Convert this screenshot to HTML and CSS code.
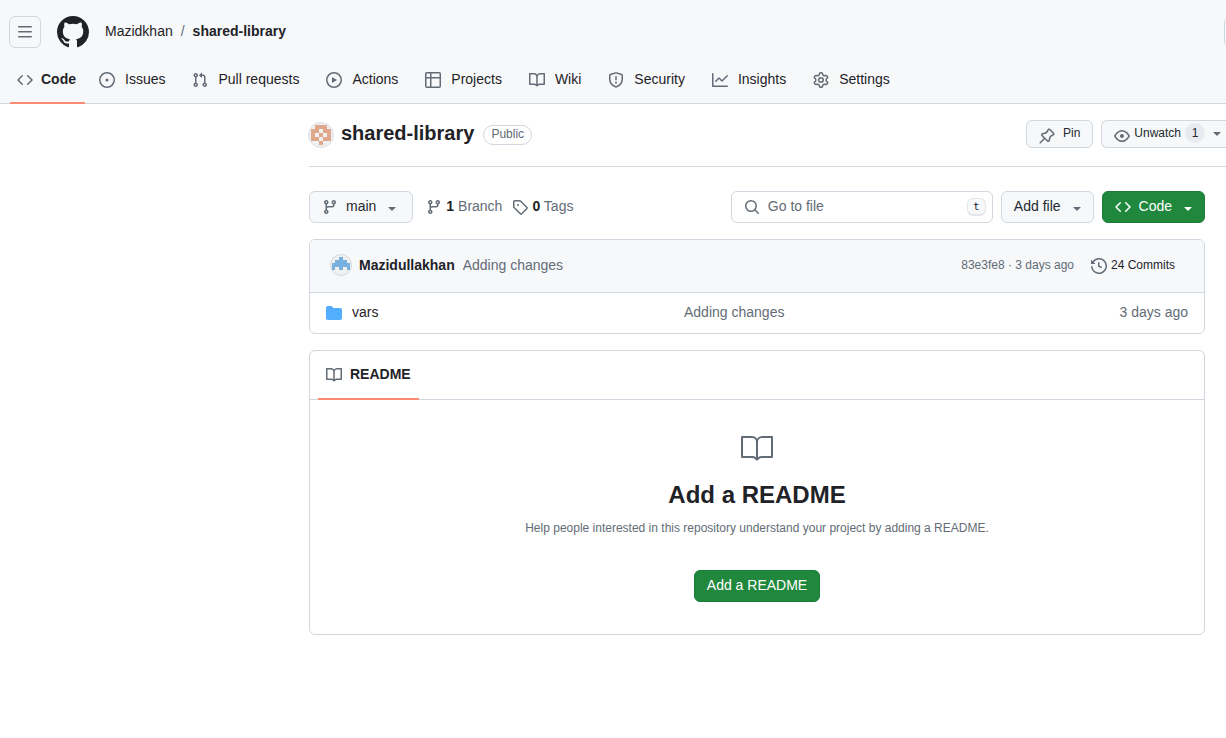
FILE: index.html
```html
<!DOCTYPE html>
<html lang="en">
<head>
<meta charset="utf-8">
<meta name="viewport" content="width=device-width, initial-scale=1">
<title>Mazidkhan/shared-library</title>
<link rel="stylesheet" href="styles.css">
</head>
<body>
<svg class="sprite" aria-hidden="true">
  <symbol id="i-code" viewBox="0 0 16 16"><path d="m11.28 3.22 4.25 4.25a.75.75 0 0 1 0 1.06l-4.25 4.25a.749.749 0 0 1-1.275-.326.749.749 0 0 1 .215-.734L13.94 8l-3.72-3.72a.749.749 0 0 1 .326-1.275.749.749 0 0 1 .734.215Zm-6.56 0a.751.751 0 0 1 1.042.018.751.751 0 0 1 .018 1.042L2.06 8l3.72 3.72a.749.749 0 0 1-.326 1.275.749.749 0 0 1-.734-.215L.47 8.53a.75.75 0 0 1 0-1.06Z"/></symbol>
  <symbol id="i-book" viewBox="0 0 16 16"><path d="M0 1.75A.75.75 0 0 1 .75 1h4.253c1.227 0 2.317.59 3 1.501A3.743 3.743 0 0 1 11.006 1h4.245a.75.75 0 0 1 .75.75v10.5a.75.75 0 0 1-.75.75h-4.507a2.25 2.25 0 0 0-1.591.659l-.622.621a.75.75 0 0 1-1.06 0l-.622-.621A2.25 2.25 0 0 0 5.258 13H.75a.75.75 0 0 1-.75-.75Zm7.251 10.324.004-5.073-.002-2.253A2.25 2.25 0 0 0 5.003 2.5H1.5v9h3.757a3.75 3.75 0 0 1 1.994.574ZM8.755 4.75l-.004 7.322a3.752 3.752 0 0 1 1.992-.572H14.5v-9h-3.495a2.25 2.25 0 0 0-2.25 2.25Z"/></symbol>
  <symbol id="i-branch" viewBox="0 0 16 16"><path d="M9.5 3.25a2.25 2.25 0 1 1 3 2.122V6A2.5 2.5 0 0 1 10 8.5H6a1 1 0 0 0-1 1v1.128a2.251 2.251 0 1 1-1.5 0V5.372a2.25 2.25 0 1 1 1.5 0v1.836A2.493 2.493 0 0 1 6 7h4a1 1 0 0 0 1-1v-.628A2.25 2.25 0 0 1 9.5 3.25Zm-6 0a.75.75 0 1 0 1.5 0 .75.75 0 0 0-1.5 0Zm8.25-.75a.75.75 0 1 0 0 1.5.75.75 0 0 0 0-1.5ZM4.25 12a.75.75 0 1 0 0 1.5.75.75 0 0 0 0-1.5Z"/></symbol>
  <symbol id="i-caret" viewBox="0 0 16 16"><path d="m4.427 7.427 3.396 3.396a.25.25 0 0 0 .354 0l3.396-3.396A.25.25 0 0 0 11.396 7H4.604a.25.25 0 0 0-.177.427Z"/></symbol>
</svg>

<header class="top">
  <div class="top-bar">
    <button class="menu" type="button" aria-label="Open menu"><svg width="16" height="16" viewBox="0 0 16 16"><path d="M1 2.75A.75.75 0 0 1 1.75 2h12.5a.75.75 0 0 1 0 1.5H1.75A.75.75 0 0 1 1 2.75Zm0 5A.75.75 0 0 1 1.75 7h12.5a.75.75 0 0 1 0 1.5H1.75A.75.75 0 0 1 1 7.75ZM1.75 12h12.5a.75.75 0 0 1 0 1.5H1.75a.75.75 0 0 1 0-1.5Z"/></svg></button>
    <a class="logo" href="#" aria-label="Homepage"><svg width="32" height="32" viewBox="0 0 16 16"><path d="M8 0c4.42 0 8 3.58 8 8a8.013 8.013 0 0 1-5.45 7.59c-.4.08-.55-.17-.55-.38 0-.27.01-1.13.01-2.2 0-.75-.25-1.23-.54-1.48 1.78-.2 3.65-.88 3.65-3.95 0-.88-.31-1.59-.82-2.15.08-.2.36-1.02-.08-2.12 0 0-.67-.22-2.2.82-.64-.18-1.32-.27-2-.27-.68 0-1.36.09-2 .27-1.53-1.03-2.2-.82-2.2-.82-.44 1.1-.16 1.92-.08 2.12-.51.56-.82 1.28-.82 2.15 0 3.06 1.86 3.75 3.64 3.95-.23.2-.44.55-.51 1.07-.46.21-1.61.55-2.33-.66-.15-.24-.6-.83-1.23-.82-.67.01-.27.38.01.53.34.19.73.9.82 1.13.16.45.68 1.31 2.69.94 0 .67.01 1.3.01 1.49 0 .21-.15.45-.55.38A7.995 7.995 0 0 1 0 8c0-4.42 3.58-8 8-8Z"/></svg></a>
    <nav class="crumbs" aria-label="Breadcrumb"><a href="#">Mazidkhan</a><span class="muted">/</span><a class="strong" href="#">shared-library</a></nav>
    <button class="search-toggle" type="button" aria-label="Search"></button>
  </div>
  <nav class="tabs" aria-label="Repository">
    <a class="tab current" href="#" aria-current="page"><svg class="icon"><use href="#i-code"/></svg>Code</a>
    <a class="tab" href="#"><svg class="icon" viewBox="0 0 16 16"><path d="M8 9.5a1.5 1.5 0 1 0 0-3 1.5 1.5 0 0 0 0 3Z"/><path d="M8 0a8 8 0 1 1 0 16A8 8 0 0 1 8 0ZM1.5 8a6.5 6.5 0 1 0 13 0 6.5 6.5 0 0 0-13 0Z"/></svg>Issues</a>
    <a class="tab" href="#"><svg class="icon" viewBox="0 0 16 16"><path d="M1.5 3.25a2.25 2.25 0 1 1 3 2.122v5.256a2.251 2.251 0 1 1-1.5 0V5.372A2.25 2.25 0 0 1 1.5 3.25Zm5.677-.177L9.573.677A.25.25 0 0 1 10 .854V2.5h1A2.5 2.5 0 0 1 13.5 5v5.628a2.251 2.251 0 1 1-1.5 0V5a1 1 0 0 0-1-1h-1v1.646a.25.25 0 0 1-.427.177L7.177 3.427a.25.25 0 0 1 0-.354ZM3.75 2.5a.75.75 0 1 0 0 1.5.75.75 0 0 0 0-1.5Zm0 9.5a.75.75 0 1 0 0 1.5.75.75 0 0 0 0-1.5Zm8.25.75a.75.75 0 1 0 1.5 0 .75.75 0 0 0-1.5 0Z"/></svg>Pull requests</a>
    <a class="tab" href="#"><svg class="icon" viewBox="0 0 16 16"><path d="M8 0a8 8 0 1 1 0 16A8 8 0 0 1 8 0ZM1.5 8a6.5 6.5 0 1 0 13 0 6.5 6.5 0 0 0-13 0Zm4.879-2.773 4.264 2.559a.25.25 0 0 1 0 .428l-4.264 2.559A.25.25 0 0 1 6 10.559V5.442a.25.25 0 0 1 .379-.215Z"/></svg>Actions</a>
    <a class="tab" href="#"><svg class="icon" viewBox="0 0 16 16"><path d="M0 1.75C0 .784.784 0 1.75 0h12.5C15.216 0 16 .784 16 1.75v12.5A1.75 1.75 0 0 1 14.25 16H1.75A1.75 1.75 0 0 1 0 14.25ZM6.5 6.5v8h7.75a.25.25 0 0 0 .25-.25V6.5Zm8-1.5V1.75a.25.25 0 0 0-.25-.25H6.5V5Zm-13 1.5v7.75c0 .138.112.25.25.25H5v-8ZM5 5V1.5H1.75a.25.25 0 0 0-.25.25V5Z"/></svg>Projects</a>
    <a class="tab" href="#"><svg class="icon"><use href="#i-book"/></svg>Wiki</a>
    <a class="tab" href="#"><svg class="icon" viewBox="0 0 16 16"><path d="M7.467.133a1.748 1.748 0 0 1 1.066 0l5.25 1.68A1.75 1.75 0 0 1 15 3.48V7c0 1.566-.32 3.182-1.303 4.682-.983 1.498-2.585 2.813-5.032 3.855a1.697 1.697 0 0 1-1.33 0c-2.447-1.042-4.049-2.357-5.032-3.855C1.32 10.182 1 8.566 1 7V3.48a1.75 1.75 0 0 1 1.217-1.667Zm.61 1.429a.25.25 0 0 0-.153 0l-5.25 1.68a.25.25 0 0 0-.174.238V7c0 1.358.275 2.666 1.057 3.86.784 1.194 2.121 2.34 4.366 3.297a.196.196 0 0 0 .154 0c2.245-.956 3.582-2.104 4.366-3.298C13.225 9.666 13.5 8.36 13.5 7V3.48a.251.251 0 0 0-.174-.237l-5.25-1.68ZM8.75 4.75v3a.75.75 0 0 1-1.5 0v-3a.75.75 0 0 1 1.5 0ZM9 10.5a1 1 0 1 1-2 0 1 1 0 0 1 2 0Z"/></svg>Security</a>
    <a class="tab" href="#"><svg class="icon" viewBox="0 0 16 16"><path d="M1.5 1.75V13.5h13.75a.75.75 0 0 1 0 1.5H.75a.75.75 0 0 1-.75-.75V1.75a.75.75 0 0 1 1.5 0Zm14.28 2.53-5.25 5.25a.75.75 0 0 1-1.06 0L7 7.06 4.28 9.78a.751.751 0 0 1-1.042-.018.751.751 0 0 1-.018-1.042l3.25-3.25a.75.75 0 0 1 1.06 0L10 7.94l4.72-4.72a.751.751 0 0 1 1.042.018.751.751 0 0 1 .018 1.042Z"/></svg>Insights</a>
    <a class="tab" href="#"><svg class="icon" viewBox="0 0 16 16"><path d="M8 0a8.2 8.2 0 0 1 .701.031C9.444.095 9.99.645 10.16 1.29l.288 1.107c.018.066.079.158.212.224.231.114.454.243.668.386.123.082.233.09.299.071l1.103-.303c.644-.176 1.392.021 1.82.63.27.385.506.792.704 1.218.315.675.111 1.422-.364 1.891l-.814.806c-.049.048-.098.147-.088.294.016.257.016.515 0 .772-.01.147.038.246.088.294l.814.806c.475.469.679 1.216.364 1.891a7.977 7.977 0 0 1-.704 1.217c-.428.61-1.176.807-1.82.63l-1.102-.302c-.067-.019-.177-.011-.3.071a5.909 5.909 0 0 1-.668.386c-.133.066-.194.158-.211.224l-.29 1.106c-.168.646-.715 1.196-1.458 1.26a8.006 8.006 0 0 1-1.402 0c-.743-.064-1.289-.614-1.458-1.26l-.289-1.106c-.018-.066-.079-.158-.212-.224a5.738 5.738 0 0 1-.668-.386c-.123-.082-.233-.09-.299-.071l-1.103.303c-.644.176-1.392-.021-1.82-.63a8.12 8.12 0 0 1-.704-1.218c-.315-.675-.111-1.422.363-1.891l.815-.806c.05-.048.098-.147.088-.294a6.214 6.214 0 0 1 0-.772c.01-.147-.038-.246-.088-.294l-.815-.806C.635 6.045.431 5.298.746 4.623a7.92 7.92 0 0 1 .704-1.217c.428-.61 1.176-.807 1.82-.63l1.102.302c.067.019.177.011.3-.071.214-.143.437-.272.668-.386.133-.066.194-.158.211-.224l.29-1.106C6.009.645 6.556.095 7.299.03 7.53.01 7.764 0 8 0Zm-.571 1.525c-.036.003-.108.036-.137.146l-.289 1.105c-.147.561-.549.967-.998 1.189-.173.086-.34.183-.5.29-.417.278-.97.423-1.529.27l-1.103-.303c-.109-.03-.175.016-.195.045-.22.312-.412.644-.573.99-.014.031-.021.11.059.19l.815.806c.411.406.562.957.53 1.456a4.709 4.709 0 0 0 0 .582c.032.499-.119 1.05-.53 1.456l-.815.806c-.081.08-.073.159-.059.19.162.346.353.677.573.989.02.03.085.076.195.046l1.102-.303c.56-.153 1.113-.008 1.53.27.161.107.328.204.501.29.447.222.85.629.997 1.189l.289 1.105c.029.109.101.143.137.146a6.6 6.6 0 0 0 1.142 0c.036-.003.108-.036.137-.146l.289-1.105c.147-.561.549-.967.998-1.189.173-.086.34-.183.5-.29.417-.278.97-.423 1.529-.27l1.103.303c.109.029.175-.016.195-.045.22-.313.411-.644.573-.99.014-.031.021-.11-.059-.19l-.815-.806c-.411-.406-.562-.957-.53-1.456a4.709 4.709 0 0 0 0-.582c-.032-.499.119-1.05.53-1.456l.815-.806c.081-.08.073-.159.059-.19a6.464 6.464 0 0 0-.573-.989c-.02-.03-.085-.076-.195-.046l-1.102.303c-.56.153-1.113.008-1.53-.27a4.44 4.44 0 0 0-.501-.29c-.447-.222-.85-.629-.997-1.189l-.289-1.105c-.029-.11-.101-.143-.137-.146a6.6 6.6 0 0 0-1.142 0ZM11 8a3 3 0 1 1-6 0 3 3 0 0 1 6 0ZM9.5 8a1.5 1.5 0 1 0-3.001.001A1.5 1.5 0 0 0 9.5 8Z"/></svg>Settings</a>
  </nav>
</header>

<main class="page">
  <div class="repo-head">
    <svg class="avatar" width="26" height="26" viewBox="0 0 26 26" aria-hidden="true"><circle cx="13" cy="13" r="12.5" fill="#f0f0f0" stroke="#dcdfe2"/><path fill="#dfa78b" fill-rule="evenodd" d="M7 3h12v4h4v12h-8v4h-4v-4H3V7h4ZM11 7v4h4V7ZM7 11v4h4v-4ZM15 11v4h4v-4ZM11 15v4h4v-4Z"/></svg>
    <h1 class="repo-name"><a href="#">shared-library</a></h1>
    <span class="badge">Public</span>
    <div class="repo-actions">
      <button class="btn small pin" type="button"><svg class="icon" viewBox="0 0 16 16"><path d="m11.294.984 3.722 3.722a1.75 1.75 0 0 1-.504 2.826l-1.327.613a3.089 3.089 0 0 0-1.707 2.084l-.584 2.454c-.317 1.332-1.972 1.8-2.94.832L5.75 11.311 1.78 15.28a.749.749 0 1 1-1.06-1.06l3.969-3.97-2.204-2.204c-.968-.968-.5-2.623.832-2.94l2.454-.584a3.08 3.08 0 0 0 2.084-1.707l.613-1.327a1.75 1.75 0 0 1 2.826-.504ZM6.283 9.723l2.732 2.731a.25.25 0 0 0 .42-.119l.584-2.454a4.586 4.586 0 0 1 2.537-3.098l1.328-.613a.25.25 0 0 0 .072-.404l-3.722-3.722a.25.25 0 0 0-.404.072l-.613 1.328a4.584 4.584 0 0 1-3.098 2.537l-2.454.584a.25.25 0 0 0-.119.42l2.731 2.732Z"/></svg>Pin</button>
      <button class="btn small watch" type="button"><svg class="icon" viewBox="0 0 16 16"><path d="M8 2c1.981 0 3.671.992 4.933 2.078 1.27 1.091 2.187 2.345 2.637 3.023a1.62 1.62 0 0 1 0 1.798c-.45.678-1.367 1.932-2.637 3.023C11.67 13.008 9.981 14 8 14c-1.981 0-3.671-.992-4.933-2.078C1.797 10.83.88 9.576.43 8.898a1.62 1.62 0 0 1 0-1.798c.45-.677 1.367-1.931 2.637-3.022C4.33 2.992 6.019 2 8 2ZM1.679 7.932a.12.12 0 0 0 0 .136c.411.622 1.241 1.75 2.366 2.717C5.176 11.758 6.527 12.5 8 12.5c1.473 0 2.825-.742 3.955-1.715 1.124-.967 1.954-2.096 2.366-2.717a.12.12 0 0 0 0-.136c-.412-.621-1.242-1.75-2.366-2.717C10.824 4.242 9.473 3.5 8 3.5c-1.473 0-2.825.742-3.955 1.715-1.124.967-1.954 2.096-2.366 2.717ZM8 10a2 2 0 1 1-.001-3.999A2 2 0 0 1 8 10Z"/></svg>Unwatch<span class="counter">1</span><svg class="icon caret"><use href="#i-caret"/></svg></button>
    </div>
  </div>

  <div class="content">
    <div class="toolbar">
      <button class="btn branch" type="button"><svg class="icon"><use href="#i-branch"/></svg>main<svg class="icon caret"><use href="#i-caret"/></svg></button>
      <div class="stats">
        <a class="stat" href="#"><svg class="icon"><use href="#i-branch"/></svg><span><strong>1</strong> Branch</span></a>
        <a class="stat" href="#"><svg class="icon" viewBox="0 0 16 16"><path d="M1 7.775V2.75C1 1.784 1.784 1 2.75 1h5.025c.464 0 .91.184 1.238.513l6.25 6.25a1.75 1.75 0 0 1 0 2.474l-5.026 5.026a1.75 1.75 0 0 1-2.474 0l-6.25-6.25A1.752 1.752 0 0 1 1 7.775Zm1.5 0c0 .066.026.13.073.177l6.25 6.25a.25.25 0 0 0 .354 0l5.025-5.025a.25.25 0 0 0 0-.354l-6.25-6.25a.25.25 0 0 0-.177-.073H2.75a.25.25 0 0 0-.25.25ZM6 5a1 1 0 1 1 0 2 1 1 0 0 1 0-2Z"/></svg><span><strong>0</strong> Tags</span></a>
      </div>
      <label class="finder"><svg class="icon" viewBox="0 0 16 16"><path d="M10.68 11.74a6 6 0 0 1-7.922-8.982 6 6 0 0 1 8.982 7.922l3.04 3.04a.749.749 0 0 1-.326 1.275.749.749 0 0 1-.734-.215ZM11.5 7a4.499 4.499 0 1 0-8.997 0A4.499 4.499 0 0 0 11.5 7Z"/></svg><input type="text" placeholder="Go to file" aria-label="Go to file"><kbd>t</kbd></label>
      <button class="btn menu-btn" type="button">Add file<svg class="icon caret"><use href="#i-caret"/></svg></button>
      <button class="btn primary menu-btn" type="button"><svg class="icon"><use href="#i-code"/></svg>Code<svg class="icon caret"><use href="#i-caret"/></svg></button>
    </div>

    <section class="box" aria-label="Files">
      <div class="commit">
        <svg class="avatar" width="22" height="22" viewBox="0 0 22 22" aria-hidden="true"><circle cx="11" cy="11" r="10.5" fill="#f0f0f0" stroke="#d5d8dc"/><path fill="#78b0e0" d="M9 3h4v3h4v3h3v7h-3v-3h-4v3H9v-3H5v3H2V9h3V6h4Z"/></svg>
        <a class="strong" href="#">Mazidullakhan</a>
        <a class="muted" href="#">Adding changes</a>
        <span class="commit-meta"><a class="muted" href="#">83e3fe8</a> · 3 days ago</span>
        <a class="history" href="#"><svg class="icon" viewBox="0 0 16 16"><path d="m.427 1.927 1.215 1.215a8.002 8.002 0 1 1-1.6 5.685.75.75 0 1 1 1.493-.154 6.5 6.5 0 1 0 1.18-4.458l1.358 1.358A.25.25 0 0 1 3.896 6H.25A.25.25 0 0 1 0 5.75V2.104a.25.25 0 0 1 .427-.177ZM7.75 4a.75.75 0 0 1 .75.75v2.992l2.028.812a.75.75 0 0 1-.557 1.392l-2.5-1A.751.751 0 0 1 7 8.25v-3.5A.75.75 0 0 1 7.75 4Z"/></svg>24 Commits</a>
      </div>
      <table class="files">
        <tr>
          <td class="name"><a href="#"><svg class="icon folder" viewBox="0 0 16 16"><path d="M1.75 1A1.75 1.75 0 0 0 0 2.75v10.5C0 14.216.784 15 1.75 15h12.5A1.75 1.75 0 0 0 16 13.25v-8.5A1.75 1.75 0 0 0 14.25 3H7.5a.25.25 0 0 1-.2-.1l-.9-1.2C6.07 1.26 5.55 1 5 1H1.75Z"/></svg>vars</a></td>
          <td><a class="muted" href="#">Adding changes</a></td>
          <td class="age">3 days ago</td>
        </tr>
      </table>
    </section>

    <section class="box">
      <nav class="box-tabs" aria-label="Repository files"><a class="box-tab" href="#"><svg class="icon"><use href="#i-book"/></svg>README</a></nav>
      <div class="blank">
        <svg class="big" viewBox="0 0 24 24"><path d="M0 3.75A.75.75 0 0 1 .75 3h7.497c1.566 0 2.945.8 3.751 2.014A4.495 4.495 0 0 1 15.75 3h7.5a.75.75 0 0 1 .75.75v15.063a.752.752 0 0 1-.755.75l-7.682-.052a3 3 0 0 0-2.142.878l-.89.891a.75.75 0 0 1-1.061 0l-.902-.901a2.996 2.996 0 0 0-2.121-.879H.75a.75.75 0 0 1-.75-.75Zm12.75 15.232a4.503 4.503 0 0 1 2.823-.971l6.927.047V4.5h-6.75a3 3 0 0 0-3 3ZM11.247 7.497a3 3 0 0 0-3-2.997H1.5V18h6.947c1.018 0 2.006.346 2.803.98Z"/></svg>
        <h2>Add a README</h2>
        <p>Help people interested in this repository understand your project by adding a README.</p>
        <button class="btn primary" type="button">Add a README</button>
      </div>
    </section>
  </div>
</main>
</body>
</html>
```
FILE: styles.css
```css
* { box-sizing: border-box; }
body {
  margin: 0;
  font: 14px/20px "Liberation Sans", Arial, sans-serif;
  color: #1f2328;
  background: #fff;
}
a { color: inherit; text-decoration: none; }
button, input { font: inherit; color: inherit; }
svg { fill: #636c76; }
.sprite { position: absolute; width: 0; height: 0; }
.sprite symbol { fill: inherit; }
/* icons hang slightly below the text's centre line */
.icon { width: 16px; height: 16px; flex: none; margin-top: 2px; }
.muted { color: #636c76; }
.strong, strong { font-weight: 700; color: #1f2328; }
.avatar { flex: none; }

.top {
  background: #f6f8fa;
  border-bottom: 1px solid #d0d7de;
  overflow-x: clip;
}
.top-bar { display: flex; align-items: center; padding: 16px 0 7px 9px; }
.menu {
  display: flex; align-items: center; justify-content: center;
  width: 32px; height: 32px; padding: 0;
  border: 1px solid #d0d7de; border-radius: 6px; background: transparent;
}
.logo { display: flex; margin-left: 16px; }
.logo svg { fill: #1f2328; }
.crumbs { display: flex; gap: 8px; margin-left: 16px; padding-bottom: 2px; }
.search-toggle {
  width: 32px; height: 30px; margin: 0 -30px 0 auto;
  border: 1px solid #d0d7de; border-radius: 6px; background: transparent;
}
.tabs { display: flex; gap: 11px; padding-left: 10px; }
.tab {
  display: flex; align-items: center; gap: 10px;
  height: 48px; padding: 0 8px;
}
.tab.current {
  gap: 8px; height: 49px; padding: 1px 9px 0 7px; margin: 0 -5px -1px 0;
  font-weight: 700; border-bottom: 2px solid #fd8c73;
}

.page { padding-left: 309px; }
.repo-head {
  display: flex; align-items: flex-start;
  padding: 16px 0 18px;
  border-bottom: 1px solid #d0d7de;
}
.repo-head .avatar { margin: 2px 0 0 -1px; }
.repo-name { margin: 0 9px 0 7px; font-size: 20px; line-height: 26px; }
.badge {
  margin-top: 5px; padding: 0 7px 2px;
  border: 1px solid #d0d7de; border-radius: 10px;
  font-size: 12px; line-height: 16px; color: #636c76;
}
.repo-actions { display: flex; gap: 8px; margin-left: auto; }

.btn {
  display: inline-flex; align-items: center;
  height: 32px; padding: 0 12px 2px;
  border: 1px solid #d0d7de; border-radius: 6px;
  background: #f6f8fa; color: #24292f; white-space: nowrap;
}
.btn .caret { margin-top: 3px; }
.btn.small { height: 28px; font-size: 12px; }
.btn.small .icon { margin-top: 5px; }
.pin { gap: 8px; }
.btn.watch { gap: 4px; padding-right: 1px; border-right: 0; border-radius: 6px 0 0 6px; }
.counter {
  min-width: 20px; border-radius: 10px;
  background: #e7ebef; text-align: center;
}
.btn.small .caret { margin-top: 0; }
.btn.primary { background: #1f883d; border-color: #1d7c39; color: #fff; }
.primary svg { fill: #fff; }

.content { display: flex; flex-direction: column; gap: 16px; padding: 24px 21px 24px 0; }
.toolbar { display: flex; align-items: center; gap: 8px; }
.toolbar .btn { gap: 8px; }
.toolbar .menu-btn { padding-right: 8px; }
.stats { display: flex; gap: 10px; margin-left: 5px; padding-bottom: 2px; }
.stat { display: flex; align-items: center; gap: 4px; color: #636c76; }
.finder {
  display: flex; align-items: center; gap: 8px;
  width: 262px; height: 32px; margin-left: auto; padding: 0 6px 0 12px;
  border: 1px solid #d0d7de; border-radius: 6px;
}
.finder .icon { margin-top: 0; }
.finder input { flex: 1; min-width: 0; padding: 0 0 2px; border: 0; outline: 0; background: transparent; }
.finder input::placeholder { color: #636c76; opacity: 1; }
kbd {
  width: 19px; height: 18px; text-align: center;
  border: 1px solid #e3e7eb; border-bottom-width: 2px; border-radius: 6px;
  background: #f6f8fa;
  font: 11px/15px "DejaVu Sans Mono", monospace;
}

.box { border: 1px solid #d0d7de; border-radius: 6px; overflow: hidden; }
.commit {
  display: flex; align-items: center; gap: 8px;
  padding: 14px 29px 16px 20px;
  background: #f6f8fa; border-bottom: 1px solid #d0d7de;
}
.commit .avatar { margin-right: -1px; }
.commit-meta { margin-left: auto; font-size: 12px; color: #636c76; }
.history { display: flex; align-items: center; gap: 4px; margin-left: 9px; font-size: 12px; }
.files { width: 100%; border-collapse: collapse; table-layout: fixed; }
.files td { height: 40px; padding: 0 0 2px; color: #636c76; }
.files .name { padding-left: 16px; width: 374px; }
.name a { display: flex; align-items: center; gap: 10px; color: #1f2328; }
.files .age { width: 136px; padding-right: 16px; text-align: right; }
.folder { fill: #54aeff; }

.box-tabs { display: flex; padding-left: 8px; border-bottom: 1px solid #d0d7de; }
.box-tab {
  display: flex; align-items: center; gap: 8px;
  height: 49px; margin-bottom: -1px; padding: 0 8px 2px;
  border-bottom: 2px solid #fd8c73; font-weight: 700;
}
.blank { display: flex; flex-direction: column; align-items: center; padding: 32px; }
.big { width: 32px; height: 32px; }
.blank h2 { margin: 13px 0 5px; font-size: 24px; line-height: 36px; }
.blank p { margin: 0 0 32px; font-size: 12px; line-height: 20px; color: #636c76; }
```
